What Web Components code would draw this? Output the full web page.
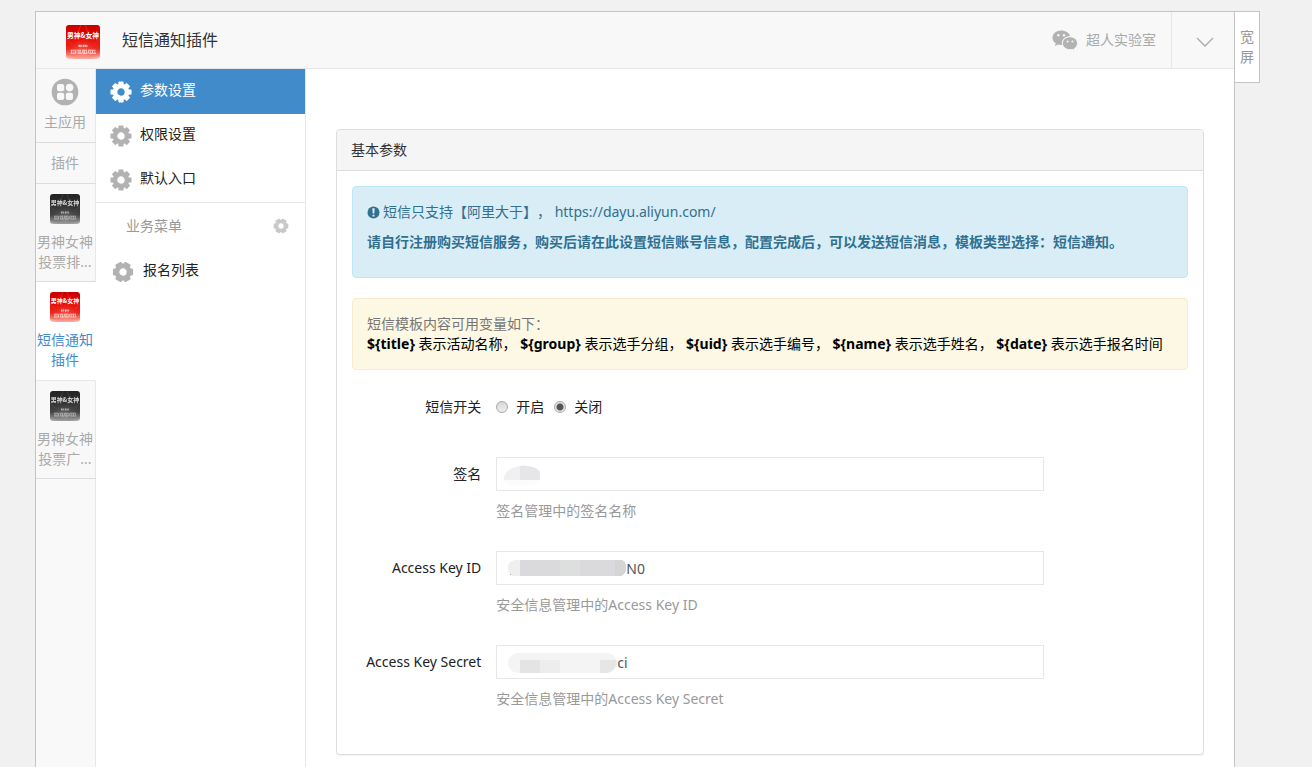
<!DOCTYPE html>
<html lang="zh-CN">
<head>
<meta charset="utf-8">
<title>短信通知插件</title>
<style>
  html { background: #f1f1f1; }
  body {
    margin: 0;
    font: 14px/20px "Noto Sans", "Noto Sans CJK SC", sans-serif;
    color: #333;
    text-spacing-trim: space-all;
  }
</style>
</head>
<body>
<plugin-page></plugin-page>

<script>
const define = (name, html, setup) => {
  const template = document.createElement('template');
  template.innerHTML = html;
  customElements.define(name, class extends HTMLElement {
    connectedCallback() {
      if (this.shadowRoot) return;
      this.attachShadow({ mode: 'open' }).append(template.content.cloneNode(true));
      if (setup) setup(this, s => this.shadowRoot.querySelector(s));
    }
  });
};

/* Gear with a chosen number of teeth; the first tooth points up, or sideways for six */
const gearPath = teeth => {
  const pts = [];
  const step = Math.PI * 2 / teeth;
  const start = teeth === 6 ? 0 : -Math.PI / 2;
  const shape = teeth === 6
    ? [[7.2, -.5], [9.7, -.27], [9.7, .27], [7.2, .5]]
    : [[7.6, -.27], [10, -.19], [10, .19], [7.6, .27]];
  for (let i = 0; i < teeth; i++) {
    for (const [r, d] of shape) {
      const t = start + i * step + d;
      pts.push((11 + r * Math.cos(t)).toFixed(2) + ' ' + (11 + r * Math.sin(t)).toFixed(2));
    }
  }
  return 'M' + pts.join('L') + 'ZM11 6.6a4.4 4.4 0 1 0 0 8.8a4.4 4.4 0 1 0 0-8.8Z';
};

define('gear-icon', `
<style>
  :host { display: block; width: 22px; height: 22px; color: #b2b2b2; }
  svg { display: block; width: 100%; height: 100%; }
</style>
<svg viewBox="0 0 22 22" aria-hidden="true"><path fill="currentColor" stroke="currentColor" stroke-width="1.400" stroke-linejoin="round" fill-rule="evenodd"/></svg>`,
(el, $) => $('path').setAttribute('d', gearPath(+el.getAttribute('teeth') || 8)));

define('app-thumb', `
<style>
  :host { display: block; width: 30px; height: 30px; }
  :host([gray]) { filter: grayscale(1) brightness(.85); }
  svg { display: block; width: 100%; height: 100%; border-radius: 3px; }
  text { font: 700 6px "Noto Sans CJK SC", sans-serif; }
</style>
<svg viewBox="0 0 30 30" aria-hidden="true">
  <defs>
    <linearGradient id="base" x2="0" y2="1">
      <stop offset="0" stop-color="#c40000"/><stop offset=".3" stop-color="#e60400"/>
      <stop offset=".7" stop-color="#e82a20"/><stop offset=".88" stop-color="#f09080"/><stop offset="1" stop-color="#fff4ee"/>
    </linearGradient>
    <radialGradient id="glow" cx=".5" cy=".85" r=".6">
      <stop offset="0" stop-color="#ff8a78" stop-opacity=".7"/><stop offset="1" stop-color="#e00" stop-opacity="0"/>
    </radialGradient>
  </defs>
  <rect width="30" height="30" fill="url(#base)"/>
  <rect width="30" height="30" fill="url(#glow)"/>
  <path d="M13 0l-2 6M17 0l2 6M0 12l5 5M30 12l-5 5" stroke="#ff6a50" stroke-width=".6" opacity=".5"/>
  <text x="15" y="11.4" text-anchor="middle" fill="#fff">男神&amp;女神</text>
  <g fill="none" stroke="#fff" opacity=".75">
    <path d="M11 18.500h3M14.800 18.500h4" stroke-width="2" stroke-dasharray="1.200 .4"/>
    <path d="M4 22.200h4.500M9.300 22.200h4M14 22.200h4.500M19.500 22.200h6.500M4 25h5M10 25h4M15 25h4M20 25h6.500" stroke-width=".8"/>
    <path d="M4.500 23.600h22" stroke-width="2.400" stroke-dasharray=".9 1.300 .6 .9"/>
  </g>
</svg>`);

define('rail-item', `
<style>
  :host { display: block; border-bottom: 1px solid #dcdcdf; border-right: 1px solid #e7e7eb; text-align: center; color: #aaa; background: #f8f8f8; }
  :host([active]) { background: #fff; border-right-color: #fff; border-bottom-color: #e7e7eb; color: #428bca; padding-bottom: 1px; }
  a { display: flex; flex-direction: column; align-items: center; gap: 8px; padding: 10px 1px 10px 0; color: inherit; text-decoration: none; }
  :host([app]) a { padding-bottom: 9px; }
  :host([home]) a { padding-top: 9px; gap: 7px; }
  span { width: 56px; }
</style>
<a href="#"><slot name="icon"></slot><span><slot></slot></span></a>`);

define('app-rail', `
<style>
  :host { display: flex; flex-direction: column; width: 60px; flex: none; background: #f9f9f9; }
  .rest { flex: 1; border-right: 1px solid #e7e7eb; }
  svg { display: block; width: 28px; height: 28px; margin-bottom: -1px; }
</style>
<rail-item home>
  <svg slot="icon" viewBox="0 0 28 28" aria-hidden="true">
    <circle cx="14" cy="14" r="13.300" fill="#b2b2b2"/>
    <g fill="#f8f8f8"><rect x="6" y="6" width="7.200" height="7.200" rx="2"/><circle cx="18.600" cy="9.600" r="3.800"/>
    <rect x="6" y="14.800" width="7.200" height="7.200" rx="2"/><rect x="14.800" y="14.800" width="7.200" height="7.200" rx="2"/></g>
  </svg>主应用</rail-item>
<rail-item plain>插件</rail-item>
<rail-item app><app-thumb gray slot="icon"></app-thumb>男神女神投票排...</rail-item>
<rail-item app active><app-thumb slot="icon"></app-thumb>短信通知插件</rail-item>
<rail-item app><app-thumb gray slot="icon"></app-thumb>男神女神投票广...</rail-item>
<div class="rest"></div>`);

define('menu-item', `
<style>
  :host { display: block; height: 45px; margin-bottom: -1px; color: #222; }
  :host([active]) { background: #428bca; color: #fff; --gear: #fff; }
  a { display: flex; align-items: center; gap: 8px; height: 100%; box-sizing: border-box; padding-left: 14px; color: inherit; text-decoration: none; }
  span { padding-bottom: 3px; }
  gear-icon { color: var(--gear, #b2b2b2); }
  .six { display: none; }
  :host([sub]) a { padding-left: 16px; gap: 9px; }
  :host([sub]) .eight { display: none; }
  :host([sub]) .six { display: block; }
</style>
<a href="#"><gear-icon class="eight"></gear-icon><gear-icon class="six" teeth="6"></gear-icon><span><slot></slot></span></a>`);

define('side-menu', `
<style>
  :host { display: block; width: 209px; flex: none; border-right: 1px solid #e7e7eb; }
  nav { padding-bottom: 1px; }
  .group { display: flex; align-items: center; justify-content: space-between; height: 46px; padding: 0 16px 0 30px; border-top: 1px solid #e7e7eb; color: #999; }
  .group gear-icon { width: 16px; height: 16px; color: #c8c8c8; }
  button { border: 0; padding: 0; background: none; cursor: pointer; }
</style>
<nav>
  <menu-item active>参数设置</menu-item>
  <menu-item>权限设置</menu-item>
  <menu-item>默认入口</menu-item>
</nav>
<div class="group"><span>业务菜单</span><button type="button" aria-label="管理菜单"><gear-icon teeth="6"></gear-icon></button></div>
<menu-item sub>报名列表</menu-item>`);

define('page-header', `
<style>
  :host { display: flex; align-items: center; height: 56px; background: #f8f8f8; border-bottom: 1px solid #e7e7eb; color: #aaa; }
  app-thumb { width: 34px; height: 34px; margin: 4px 22px 0 30px; }
  h1 { flex: 1; margin: 0; font-size: 16px; line-height: 24px; font-weight: 400; color: #333; }
  .account { display: flex; align-items: center; gap: 8px; padding-right: 15px; color: inherit; text-decoration: none; }
  .account svg { width: 26px; height: 22px; }
  button { align-self: stretch; width: 63px; padding: 4px 0 0 4px; border: 0; border-left: 1px solid #e7e7eb; background: none; cursor: pointer; }
  button svg { display: block; width: 18px; height: 10px; margin: auto; }
</style>
<app-thumb></app-thumb>
<h1>短信通知插件</h1>
<a class="account" href="#">
  <svg viewBox="0 0 26 22" aria-hidden="true">
    <path fill="#b2b2b2" d="M9.200 1.500C4.400 1.500 .5 4.700 .5 8.700c0 2.300 1.200 4.200 3.200 5.500l-.8 2.900 3.200-1.700c1 .3 2 .5 3.200.5h.8c-1.200-5 3-9 8-8.700C17.300 3.800 13.600 1.500 9.200 1.500Z"/>
    <path fill="#b2b2b2" stroke="#f8f8f8" d="M18 7.800c-4.200 0-7.600 2.900-7.600 6.500s3.400 6.400 7.600 6.400c.9 0 1.700-.1 2.500-.4l2.600 1.500-.7-2.300c1.900-1.200 3.100-3 3.100-5.200 0-3.600-3.300-6.500-7.500-6.500Z"/>
    <g fill="#f8f8f8"><circle cx="6.300" cy="6.300" r="1.200"/><circle cx="12" cy="6.300" r="1.200"/><circle cx="15.600" cy="12.500" r="1"/><circle cx="20.400" cy="12.500" r="1"/></g>
  </svg>
  <span>超人实验室</span>
</a>
<button type="button" aria-label="展开">
  <svg viewBox="0 0 18 10" fill="none" stroke="#aaa" stroke-width="1.300" aria-hidden="true"><path d="M1 1l8 8 8-8"/></svg>
</button>`);

define('info-alert', `
<style>
  :host { display: block; padding: 15px 14px; margin-bottom: 20px; border: 1px solid #bce8f1; border-radius: 4px; background: #d9edf7; color: #31708f; }
  :host([kind="warning"]) { border-color: #faebcc; background: #fcf8e3; color: #777; }
</style>
<slot></slot>`);

define('form-row', `
<style>
  :host { display: grid; grid-template-columns: 2fr 8fr 2fr; margin: 0 -15px 30px; }
  .label { padding-top: 7px; text-align: right; color: #222; white-space: nowrap; }
  .field { padding: 0 15px; min-width: 0; }
  .box { position: relative; }
  input { display: block; box-sizing: border-box; width: 100%; height: 34px; padding: 0 12px 0 var(--start, 12px); border: 1px solid #e7e7eb; border-radius: 0; background: #fff; font: inherit; color: #555; outline: 0; }
  p { margin: 10px 0 0; color: #999; }
</style>
<label class="label" for="field"></label>
<div class="field">
  <div class="box"><input id="field" type="text"><slot></slot></div>
  <p></p>
</div>`,
(el, $) => {
  $('label').textContent = el.getAttribute('label');
  $('input').value = el.getAttribute('value') || '';
  $('p').textContent = el.getAttribute('help');
});

define('switch-row', `
<style>
  :host { display: grid; grid-template-columns: 2fr 8fr 2fr; height: 37px; margin: 0 -15px 30px; color: #222; }
  .label { padding-top: 7px; text-align: right; }
  .options { display: flex; align-items: flex-start; gap: 10px; padding: 7px 15px 0; }
  .options label { display: flex; align-items: center; gap: 8px; }
  input { appearance: none; box-sizing: border-box; width: 12px; height: 12px; margin: 0; border: 1px solid #aaa; border-radius: 50%; background: linear-gradient(#d8d8d8, #eee); }
  input:checked { background: radial-gradient(circle, #555 0 3px, #e6e6e6 4px); }
</style>
<div class="label" id="name">短信开关</div>
<div class="options" role="radiogroup" aria-labelledby="name">
  <label><input type="radio" name="sms">开启</label>
  <label><input type="radio" name="sms" checked>关闭</label>
</div>`);

define('settings-panel', `
<style>
  :host { display: block; border: 1px solid #ddd; border-radius: 4px; background: #fff; box-shadow: 0 1px 1px rgba(0,0,0,.05); }
  h2 { margin: 0; padding: 10px 14px; border-bottom: 1px solid #ddd; border-radius: 3px 3px 0 0; background: #f5f5f5; font-size: 14px; line-height: 20px; font-weight: 400; }
  .body { padding: 15px 15px 0; display: flow-root; }
  info-alert p { margin: 0 0 10px; }
  info-alert div { color: #000; }
  info-alert svg { width: 13px; height: 13px; vertical-align: -2px; margin-right: 3px; }
  a { color: inherit; text-decoration: none; }
  .mask { position: absolute; left: 7px; top: 7px; width: 130px; height: 22px; pointer-events: none; }
  .id { --start: 129px; }
  .secret { --start: 120px; }
  form-row:last-of-type { margin-bottom: 45px; }
</style>
<h2>基本参数</h2>
<form class="body">
  <info-alert>
    <p><svg viewBox="0 0 13 13" aria-hidden="true"><circle cx="6.500" cy="6.500" r="6" fill="#31708f"/><path d="M5.300 2.200h2.400L7.300 7.600H5.700ZM5.500 8.700h2v1.800h-2Z" fill="#d9edf7"/></svg>短信只支持【阿里大于】， <a href="https://dayu.aliyun.com/">https://dayu.aliyun.com/</a></p>
    <p><b>请自行注册购买短信服务，购买后请在此设置短信账号信息，配置完成后，可以发送短信消息，模板类型选择：短信通知。</b></p>
  </info-alert>
  <info-alert kind="warning">短信模板内容可用变量如下：
    <div><b>\${title}</b> 表示活动名称， <b>\${group}</b> 表示选手分组， <b>\${uid}</b> 表示选手编号， <b>\${name}</b> 表示选手姓名， <b>\${date}</b> 表示选手报名时间</div>
  </info-alert>
  <switch-row></switch-row>
  <form-row label="签名" help="签名管理中的签名名称">
    <svg class="mask" viewBox="0 0 130 22" aria-hidden="true"><path d="M1 16Q1 6 13 3Q20 0 31 3.500Q37 6 37 9V16Z" fill="#f0f0f1"/><path d="M17 2Q24 1 31 3.500Q37 6 37 9V16H17Z" fill="#e6e6e8"/><path d="M1 16h36q-1 5-10 6H10q-7-1-9-6Z" fill="#fcfcfc"/></svg>
  </form-row>
  <form-row class="id" label="Access Key ID" value="N0" help="安全信息管理中的Access Key ID">
    <svg class="mask" viewBox="0 0 130 22" aria-hidden="true"><path d="M7 15h2v2H7Z" fill="#555"/><path d="M17 2h-5q-7 1-7 8t6 8h6Z" fill="#f0eff0"/><path d="M17 2h102q4 2 4 8t-5 8H17Z" fill="#dad9db"/><path d="M57 2h20v16H57Z" fill="#dcdfde"/><path d="M112 2h7q4 2 4 8t-5 8h-6Z" fill="#d6d5d6"/></svg>
  </form-row>
  <form-row class="secret" label="Access Key Secret" value="ci" help="安全信息管理中的Access Key Secret">
    <svg class="mask" viewBox="0 0 130 22" aria-hidden="true"><rect x="5" y="1" width="109" height="20" rx="10" fill="#f4f4f4"/><path d="M17 8h20v13H17Z" fill="#e4e4e4"/><path d="M37 8h20v13H37Z" fill="#ededed"/><path d="M97 8h17q-1 11-10 13h-7Z" fill="#e6e6e5"/></svg>
  </form-row>
</form>`);

define('plugin-page', `
<style>
  :host { display: flex; align-items: flex-start; padding: 11px 52px 0 35px; min-height: 100vh; box-sizing: border-box; }
  .frame { flex: 1; min-width: 0; align-self: stretch; display: flex; flex-direction: column; border: 1px solid #c4c4c4; border-bottom: 0; background: #fff; }
  .content { flex: 1; display: flex; }
  main { flex: 1; min-width: 0; padding: 60px 30px 12px; }
  .wide { width: 25px; height: 72px; padding: 0 4px; box-sizing: border-box; border: 1px solid #c4c4c4; border-left: 0; background: #fff; font: inherit; color: #999; cursor: pointer; }
</style>
<div class="frame">
  <page-header></page-header>
  <div class="content">
    <app-rail></app-rail>
    <side-menu></side-menu>
    <main><settings-panel></settings-panel></main>
  </div>
</div>
<button class="wide" type="button">宽屏</button>`);
</script>
</body>
</html>
